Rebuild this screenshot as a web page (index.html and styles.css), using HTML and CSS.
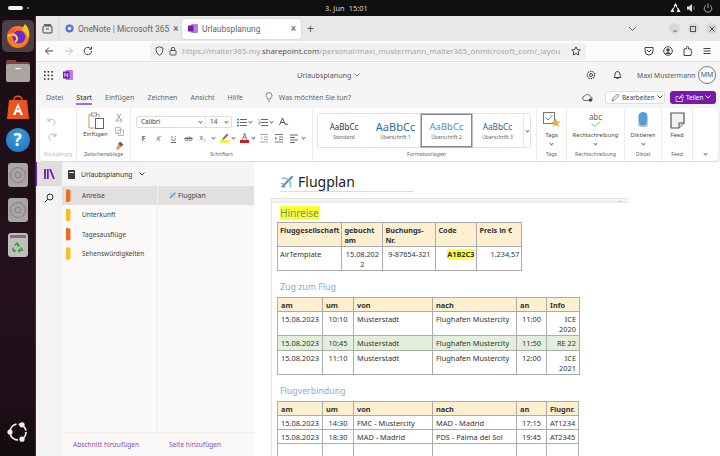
FILE: index.html
```html
<!DOCTYPE html>
<html lang="de">
<head>
<meta charset="utf-8">
<title>Urlaubsplanung</title>
<link rel="stylesheet" href="styles.css">
</head>
<body>
<header class="topbar">
  <div class="activities"><i class="pill"></i><i class="dot"></i></div>
  <div class="clock">3. Jun&nbsp;&nbsp;15:01</div>
  <div class="tray">
    <svg width="11" height="10" viewBox="0 0 11 10"><path d="M5.500 0 7.500 3H3.500Z M2.500 5 4.500 9H.5Z M8.500 5 10.500 9H6.500Z" fill="#eee"/><path d="M5.500 2 2.500 7M5.500 2 8.500 7" stroke="#eee"/></svg>
    <svg width="10" height="10" viewBox="0 0 10 10"><path d="M0 3.500H2L5 1V9L2 6.500H0Z" fill="#ddd"/><path d="M6.500 3a3 3 0 0 1 0 4" stroke="#777" fill="none"/></svg>
    <svg width="10" height="10" viewBox="0 0 10 10"><path d="M3 2.200a3.800 3.800 0 1 0 4 0M5 .5V5" stroke="#aaa" fill="none"/></svg>
  </div>
</header>
<div class="desktop">
  <nav class="dock">
    <div class="dock-item dock-active">
      <svg width="26" height="26" viewBox="0 0 26 26"><circle cx="13" cy="14" r="11" fill="#ff7a1f"/><path d="M20 1c4 4 5 9 4 14L17 6Z" fill="#ffc21f"/><path d="M2 11c2-4 5-6 9-6l-3 5Z" fill="#ff4f3c"/><circle cx="14" cy="14" r="6.500" fill="#6a2bd0"/><path d="M3 13c3-2 6-2 8 0s1 5-1 6" stroke="#ffd23f" stroke-width="2" fill="none"/></svg>
    </div>
    <div class="dock-item dock-folder">
      <svg width="24" height="22" viewBox="0 0 24 22"><path d="M0 2a2 2 0 0 1 2-2h7l2 2h11a2 2 0 0 1 2 2v3H0Z" fill="#8a3f3f"/><rect y="4" width="24" height="18" rx="2" fill="#a8a5a2"/><rect x="9.500" y="8" width="5" height="1.200" fill="#fff"/></svg>
    </div>
    <div class="dock-item dock-store">
      <svg width="24" height="24" viewBox="0 0 24 24"><path d="M3 5h18l2 19H1Z" fill="#e9541f"/><path d="M8 5c0-5 8-5 8 0" stroke="#e9541f" stroke-width="1.500" fill="none"/><path d="M12 8 7 20h2.500l1-2.800h3l1 2.800H17Zm0 4 1 3h-2Z" fill="#fff"/></svg>
    </div>
    <div class="dock-item dock-help">
      <div class="help-ball">?</div>
    </div>
    <div class="dock-item dock-disk">
      <div class="disk-tile"><svg width="18" height="18" viewBox="0 0 18 18"><circle cx="9" cy="9" r="7.500" fill="none" stroke="#888" stroke-width="1.100"/><circle cx="9" cy="9" r="2.800" fill="none" stroke="#888" stroke-width="1.100"/><path d="M12 3l3 1-1 3" stroke="#999" fill="none"/></svg></div>
    </div>
    <div class="dock-item dock-disk2">
      <div class="disk-tile"><svg width="18" height="18" viewBox="0 0 18 18"><circle cx="9" cy="9" r="7.500" fill="none" stroke="#888" stroke-width="1.100"/><circle cx="9" cy="9" r="2.800" fill="none" stroke="#888" stroke-width="1.100"/><path d="M12 3l3 1-1 3" stroke="#999" fill="none"/></svg></div>
    </div>
    <div class="dock-item dock-trash">
      <div class="trash-tile"><i class="trash-lid"></i><svg width="13" height="13" viewBox="0 0 13 13"><path d="M6.500 1 9 5 7 6 5.500 3.500 4.500 5 3 4ZM10.500 6 12.500 10H9V12L6.500 9.500 9 7V8.800H10.300L9 6.800ZM1 7.500 3 6 2.500 8 4.500 9V11H2Z" fill="#2fa32f"/></svg></div>
    </div>
    <div class="dock-spacer"></div>
    <div class="dock-ubuntu">
      <svg width="22" height="22" viewBox="0 0 22 22"><circle cx="11" cy="11" r="8" fill="none" stroke="#eee" stroke-width="1.800" stroke-dasharray="10.500 2.200"/><circle cx="15" cy="3.800" r="2.600" fill="#eee"/><circle cx="3" cy="11" r="2.600" fill="#eee"/><circle cx="15" cy="18.200" r="2.600" fill="#eee"/></svg>
    </div>
  </nav>
  <div class="browser">
    <div class="tabstrip">
      <div class="tab-side">
        <svg width="11" height="11" viewBox="0 0 11 11"><rect x="1" y="3" width="9" height="7" rx="1" fill="none" stroke="#444"/><rect x="2" y="1" width="7" height="2" fill="#666"/><path d="M4 6h3" stroke="#444"/></svg>
      </div>
      <div class="btab">
        <svg class="fav" width="9" height="9" viewBox="0 0 9 9"><circle cx="4.500" cy="4.500" r="4" fill="#4a78d8"/><circle cx="4.500" cy="4.500" r="1.800" fill="#eee"/><path d="M4.500.5a4 4 0 0 1 4 4H6.300Z" fill="#9a66d8"/></svg>
        <span class="btab-title">OneNote | Microsoft 365</span><span class="btab-x">×</span>
      </div>
      <div class="btab btab-on">
        <svg class="fav" width="10" height="9" viewBox="0 0 10 9"><rect x="3" y="0" width="7" height="9" rx="1" fill="#b57ee0"/><rect x="0" y="1.500" width="5.500" height="6" fill="#7719aa"/></svg>
        <span class="btab-title">Urlaubsplanung</span><span class="btab-x">×</span>
      </div>
      <div class="tab-plus">+</div>
      <div class="tab-fill"></div>
      <svg class="tab-chev" width="9" height="6" viewBox="0 0 9 6"><path d="M1 1l3.500 3.500L8 1" fill="none" stroke="#666"/></svg>
      <div class="winbtns">
        <span class="winbtn"><svg width="8" height="8" viewBox="0 0 8 8"><path d="M2 6h4" stroke="#666"/></svg></span>
        <span class="winbtn"><svg width="8" height="8" viewBox="0 0 8 8"><rect x="1.500" y="1.500" width="5" height="5" fill="none" stroke="#555"/></svg></span>
        <span class="winbtn"><svg width="8" height="8" viewBox="0 0 8 8"><path d="M1.500 1.500l5 5m0-5l-5 5" stroke="#444"/></svg></span>
      </div>
    </div>
    <div class="navbar">
      <div class="nav-btns">
        <svg width="10" height="10" viewBox="0 0 10 10"><path d="M9 5H1.500M5 1.500 1.500 5 5 8.500" fill="none" stroke="#444"/></svg>
        <svg width="10" height="10" viewBox="0 0 10 10"><path d="M1 5h7.500M5 1.500 8.500 5 5 8.500" fill="none" stroke="#bbb"/></svg>
        <svg width="10" height="10" viewBox="0 0 10 10"><path d="M8.500 5a3.700 3.700 0 1 1-1-2.500M8.500 .8v2.400H6" fill="none" stroke="#444"/></svg>
      </div>
      <div class="urlbar">
        <svg width="9" height="10" viewBox="0 0 9 10"><path d="M4.500.7 8 2c0 4-1.200 6-3.500 7.300C2.200 8 1 6 1 2Z" fill="none" stroke="#555"/></svg>
        <svg width="8" height="10" viewBox="0 0 8 10"><rect x="1" y="4.500" width="6" height="4.500" rx=".8" fill="none" stroke="#555"/><path d="M2.300 4.500V3a1.700 1.700 0 0 1 3.400 0v1.500" fill="none" stroke="#555"/></svg>
        <div class="url"><span>https://malter365-my.</span><b>sharepoint.com</b><span>/personal/maxi_mustermann_malter365_onmicrosoft_com/_layou</span></div>
        <svg width="10" height="10" viewBox="0 0 10 10"><path d="M5 .8 6.300 3.600 9.300 4 7.100 6 7.700 9 5 7.500 2.300 9 2.900 6 .7 4 3.700 3.600Z" fill="none" stroke="#444"/></svg>
      </div>
      <div class="nav-tools">
        <svg width="10" height="10" viewBox="0 0 10 10"><path d="M1 1.500h8V5a4 4 0 0 1-8 0Z" fill="none" stroke="#444"/><path d="M3 4l2 2 2-2" fill="none" stroke="#444"/></svg>
        <svg width="10" height="10" viewBox="0 0 10 10"><circle cx="5" cy="5" r="4.300" fill="none" stroke="#444"/><circle cx="5" cy="4" r="1.800" fill="#444"/><path d="M2 8c1-2.500 5-2.500 6 0Z" fill="#444"/></svg>
        <svg width="10" height="10" viewBox="0 0 10 10"><path d="M1 3h2.500V1.500a1 1 0 0 1 2 0V3H8v2.500a1 1 0 0 1 0 2V9.500H1Z" fill="none" stroke="#444"/></svg>
        <svg width="10" height="10" viewBox="0 0 10 10"><path d="M1.500 2.500h7M1.500 5h7M1.500 7.500h7" stroke="#444"/></svg>
      </div>
    </div>
    <div class="app">
      <div class="appbar">
        <svg class="waffle" width="9" height="9" viewBox="0 0 9 9"><g fill="#333"><rect width="1.600" height="1.600"/><rect x="3.600" width="1.600" height="1.600"/><rect x="7.200" width="1.600" height="1.600"/><rect y="3.600" width="1.600" height="1.600"/><rect x="3.600" y="3.600" width="1.600" height="1.600"/><rect x="7.200" y="3.600" width="1.600" height="1.600"/><rect y="7.200" width="1.600" height="1.600"/><rect x="3.600" y="7.200" width="1.600" height="1.600"/><rect x="7.200" y="7.200" width="1.600" height="1.600"/></g></svg>
        <svg class="onenote" width="10" height="10" viewBox="0 0 10 10"><rect x="2.500" width="7.500" height="10" rx="1" fill="#b57ee0"/><rect y="1.500" width="6.500" height="7" rx=".5" fill="#7719aa"/><path d="M1.800 6.800V3.200L4.700 6.800V3.200" fill="none" stroke="#fff" stroke-width=".8"/></svg>
        <div class="doc-title">Urlaubsplanung <svg width="6" height="4" viewBox="0 0 6 4"><path d="M.5.500 3 3 5.500.5" fill="none" stroke="#888"/></svg></div>
        <svg class="gear" width="10" height="10" viewBox="0 0 10 10"><circle cx="5" cy="5" r="1.500" fill="none" stroke="#444"/><circle cx="5" cy="5" r="3.700" fill="none" stroke="#444" stroke-width="1.200" stroke-dasharray="1.400 .9"/></svg>
        <svg class="bell" width="9" height="10" viewBox="0 0 9 10"><path d="M1 7.500c1-1 1-2 1-3.500a2.500 2.500 0 0 1 5 0c0 1.500 0 2.500 1 3.500ZM3.500 8.500h2" fill="none" stroke="#444"/></svg>
        <div class="user">Maxi Mustermann</div>
        <div class="avatar">MM</div>
      </div>
      <div class="menutabs">
        <span class="mt">Datei</span>
        <span class="mt mt-on">Start</span>
        <span class="mt">Einfügen</span>
        <span class="mt">Zeichnen</span>
        <span class="mt">Ansicht</span>
        <span class="mt">Hilfe</span>
        <svg class="bulb" width="8" height="10" viewBox="0 0 8 10"><path d="M2.500 7C2.500 5.500 1 5 1 3.500a3 3 0 0 1 6 0C7 5 5.500 5.500 5.500 7ZM3 9h2" fill="none" stroke="#666" stroke-width=".8"/></svg>
        <span class="tell">Was möchten Sie tun?</span>
        <svg class="cloud" width="11" height="9" viewBox="0 0 11 9"><path d="M3 7.500a2.200 2.200 0 0 1-.3-4.400 3 3 0 0 1 5.600.5 2 2 0 0 1 .7 3.800Z" fill="none" stroke="#444" stroke-width=".8"/><circle cx="8.500" cy="7" r="1.800" fill="#444"/></svg>
        <span class="btn-edit"><svg width="9" height="9" viewBox="0 0 9 9"><path d="M1 8 1.500 6 6.500 1 8 2.500 3 7.500Z" fill="none" stroke="#444" stroke-width=".7"/></svg>Bearbeiten <svg width="6" height="4" viewBox="0 0 6 4"><path d="M.5.500 3 3 5.500.5" fill="none" stroke="#444"/></svg></span>
        <span class="btn-share"><svg width="9" height="9" viewBox="0 0 9 9"><path d="M1 3.500h2.500M1 3.500V8.500H7.500V6M4 6c0-2 1.500-3 3-3V1.500L8.800 3.500 7 5.500V4C5.500 4 4.500 5 4 6Z" fill="none" stroke="#fff" stroke-width=".7"/></svg>Teilen <svg width="6" height="4" viewBox="0 0 6 4"><path d="M.5.500 3 3 5.500.5" fill="none" stroke="#fff"/></svg></span>
      </div>
      <div class="ribbon">
        <section class="rg rg-undo">
          <div class="rg-body undo-body">
            <svg width="10" height="9" viewBox="0 0 10 9"><path d="M1 1v3h3M1 4c2-3 7-2 7 1.500 0 1.500-1 2.500-2 3" fill="none" stroke="#bbb"/></svg>
            <svg width="10" height="9" viewBox="0 0 10 9"><path d="M9 1v3H6M9 4C7 1 2 2 2 5.500c0 1.500 1 2.500 2 3" fill="none" stroke="#bbb"/></svg>
          </div>
          <div class="rg-label muted">Rückgängig</div>
        </section>
        <section class="rg rg-clip">
          <div class="rg-body clip-body">
            <div class="paste">
              <svg width="16" height="17" viewBox="0 0 16 17"><path d="M1 2.500h10V16H1Z" fill="#fff" stroke="#c89a60"/><rect x="3.500" y="1" width="5" height="3" fill="#fff" stroke="#999"/><rect x="7.500" y="6.500" width="8" height="10" fill="#fff" stroke="#666"/></svg>
              <span>Einfügen</span>
            </div>
            <div class="clip-tools">
              <svg width="8" height="9" viewBox="0 0 8 9"><path d="M2 .5 5.500 6.500M6 .5 2.500 6.500" stroke="#9ab" fill="none"/><circle cx="2" cy="7.500" r="1" fill="none" stroke="#9ab"/><circle cx="6" cy="7.500" r="1" fill="none" stroke="#9ab"/></svg>
              <svg width="9" height="9" viewBox="0 0 9 9"><path d="M.5.500h5v6h-5Z M3 3h5.500v5.500H3Z" fill="#f8f8f8" stroke="#bbb"/></svg>
              <svg width="9" height="9" viewBox="0 0 9 9"><path d="M5 .5 8.500 3.500 6 6 3 3Z" fill="#666"/><path d="M3 3.500 6 6 4 8.500H0C2 7.500 2 5 3 3.500Z" fill="#e8a040"/></svg>
            </div>
          </div>
          <div class="rg-label">Zwischenablage</div>
        </section>
        <section class="rg rg-font">
          <div class="rg-body font-body">
            <div class="font-row">
              <div class="fontbox"><span class="fb-name">Calibri<i class="c fb-c"></i></span><span class="fb-size">14<i class="c fb-c"></i></span></div>
              <svg class="list-ic" width="10" height="9" viewBox="0 0 10 9"><g fill="none" stroke="#666"><path d="M3 1.500h7M3 4.500h7M3 7.500h7"/></g><g fill="#2b88d8"><rect width="2" height="1.500" y=".8"/><rect width="2" height="1.500" y="3.800"/><rect width="2" height="1.500" y="6.800"/></g></svg>
              <i class="c c2"></i>
              <svg width="10" height="9" viewBox="0 0 10 9"><g fill="none" stroke="#666"><path d="M3 1.500h7M3 4.500h7M3 7.500h7"/></g><path d="M1 .5v2M.5 4h2L.5 6h2" fill="none" stroke="#2b88d8" stroke-width=".7"/></svg>
              <i class="c c2"></i>
              <svg width="10" height="10" viewBox="0 0 10 10"><path d="M.5 8 3.500 1 6.500 8M1.700 5.500h3.600" fill="none" stroke="#555"/><path d="M6 6.500 8 8.500 9.500 6.500Z" fill="#9b59c8"/></svg>
            </div>
            <div class="font-row fmt-row">
              <b class="f">F</b><i class="f f-i">K</i><u class="f">U</u><s class="f">ab</s>
              <span class="f f-x">x<sub>2</sub></span><i class="c c3"></i>
              <span class="hl"><svg width="9" height="7" viewBox="0 0 9 7"><path d="M2 6 7 .5 8.500 2 3.500 7Z" fill="#777"/></svg><i class="bar bar-y"></i></span><i class="c c3"></i>
              <span class="hl hl-a">A<i class="bar bar-r"></i></span><i class="c c3"></i>
              <svg class="ind" width="10" height="9" viewBox="0 0 10 9"><path d="M1 .5h8M5 3h4M5 5.500h4M1 8h8" stroke="#aaa"/><path d="M3.500 2.500 1 4.200 3.500 6Z" fill="#bcd"/></svg>
              <svg class="ind" width="10" height="9" viewBox="0 0 10 9"><path d="M1 .5h8M5 3h4M5 5.500h4M1 8h8" stroke="#777"/><path d="M1 2.500 3.500 4.200 1 6Z" fill="#5a9ad8"/></svg>
              <svg class="ind" width="10" height="9" viewBox="0 0 10 9"><path d="M1 1h8M1 3.500h5M1 6h8M1 8.500h5" stroke="#666"/></svg><i class="c c3"></i>
            </div>
          </div>
          <div class="rg-label">Schriftart</div>
        </section>
        <section class="rg rg-styles">
          <div class="gallery">
            <div class="st"><span class="s-t s-n">AaBbCc</span><span class="s-l">Standard</span></div>
            <div class="st"><span class="s-t s-1">AaBbCc</span><span class="s-l">Überschrift 1</span></div>
            <div class="st st-on"><span class="s-t s-2">AaBbCc</span><span class="s-l">Überschrift 2</span></div>
            <div class="st"><span class="s-t s-3">AaBbCc</span><span class="s-l">Überschrift 3</span></div>
            <div class="st-more"><i class="c"></i></div>
          </div>
          <div class="rg-label">Formatvorlagen</div>
        </section>
        <section class="rg rg-tags">
          <div class="big">
            <svg width="18" height="17" viewBox="0 0 18 17"><rect x=".5" y=".5" width="11" height="11" fill="#fff" stroke="#777"/><path d="M2.500 5.500 5 8 9.500 3" fill="none" stroke="#3aa655"/><path d="M12.500 6 14 9.500H17.500L15 11.500 16 15 12.500 13 9.500 15 10.500 11.500 8 9.500H11Z" fill="#f0a93c"/></svg>
            <span>Tags</span><i class="c"></i>
          </div>
          <div class="rg-label">Tags</div>
        </section>
        <section class="rg rg-spell">
          <div class="big">
            <div class="abc"><span>abc</span><svg width="10" height="6" viewBox="0 0 10 6"><path d="M.5 2.500 3.500 5.500 9.500.5" fill="none" stroke="#7cc48c"/></svg></div>
            <span>Rechtschreibung</span><i class="c"></i>
          </div>
          <div class="rg-label">Rechtschreibung</div>
        </section>
        <section class="rg rg-dict">
          <div class="big">
            <svg width="12" height="17" viewBox="0 0 12 17"><rect x="1.500" width="9" height="14" rx="4.500" fill="#5a9ad8"/><path d="M1 11c1 3 9 3 10 0v2c-1 3-9 3-10 0Z" fill="#bbb"/></svg>
            <span>Diktieren</span><i class="c"></i>
          </div>
          <div class="rg-label">Diktat</div>
        </section>
        <section class="rg rg-feed">
          <div class="big">
            <svg width="16" height="17" viewBox="0 0 16 17"><path d="M2 1h13v10l-5 5H2Z" fill="#f2f2f2" stroke="#555" stroke-width="1.200"/><path d="M10 16v-5h5" fill="#ddd" stroke="#555"/></svg>
            <span>Feed</span>
          </div>
          <div class="rg-label">Feed</div>
        </section>
        <div class="rg-collapse"><i class="c"></i></div>
      </div>
      <div class="workspace">
        <aside class="rail">
          <div class="rail-on"><svg width="11" height="10" viewBox="0 0 11 10"><path d="M1 0v10M3.800 0v10" stroke="#7719aa" stroke-width="1.800"/><path d="M6 0 10 10" stroke="#7719aa" stroke-width="1.800"/></svg></div>
          <div class="rail-search"><svg width="10" height="10" viewBox="0 0 10 10"><circle cx="6" cy="4" r="3" fill="none" stroke="#333"/><path d="M3.800 6.200.8 9.200" stroke="#333"/></svg></div>
        </aside>
        <div class="nbpane">
          <div class="nbhead">
            <svg width="7" height="9" viewBox="0 0 7 9"><rect width="7" height="9" rx=".8" fill="#3b3b3b"/><rect x="1.200" y="2" width="4.600" height="1" fill="#fff"/></svg>
            <span>Urlaubsplanung</span>
            <svg width="6" height="4" viewBox="0 0 6 4"><path d="M.5.500 3 3 5.500.5" fill="none" stroke="#444"/></svg>
          </div>
          <div class="nbcols">
            <ul class="sections">
              <li class="sec sec-on"><i class="sw sw-o"></i>Anreise</li>
              <li class="sec"><i class="sw sw-y"></i>Unterkunft</li>
              <li class="sec"><i class="sw sw-o"></i>Tagesausflüge</li>
              <li class="sec"><i class="sw sw-y"></i>Sehenswürdigkeiten</li>
            </ul>
            <ul class="pages">
              <li class="pg pg-on"><svg width="7" height="7" viewBox="0 0 14 14"><path d="M2.500 11.500 12 2" stroke="#5c93c0" stroke-width="2.400" stroke-linecap="round"/><path d="M9 4 1.500 3.500M9.500 5 10.500 12.500" stroke="#9cc6e4" stroke-width="2"/></svg>Flugplan</li>
            </ul>
          </div>
          <div class="nbfoot">
            <span class="add add-s">Abschnitt hinzufügen</span>
            <span class="add">Seite hinzufügen</span>
          </div>
        </div>
        <main class="page">
          <div class="page-title">
            <svg width="14" height="14" viewBox="0 0 14 14"><path d="M2.500 11.500 12 2" stroke="#5c93c0" stroke-width="2.200" stroke-linecap="round"/><path d="M8.500 4 1.500 3M9.500 5 10.800 12.500" stroke="#9cc6e4" stroke-width="2"/><path d="M3.500 9 1 8.500M4.500 10.500 5 13" stroke="#6a9cc4"/></svg>
            <span>Flugplan</span>
          </div>
          <div class="outline">
            <div class="outline-bar"><i>↔</i></div>
            <div class="h-yellow"><mark>Hinreise</mark></div>
            <table class="tbl t1">
              <colgroup><col class="c63"><col class="c41"><col class="c53"><col class="c41"><col class="c45"></colgroup>
              <tr class="hd"><td>Fluggesellschaft</td><td>gebucht am</td><td>Buchungs-<br>Nr.</td><td>Code</td><td>Preis in €</td></tr>
              <tr class="tall"><td>AirTemplate</td><td class="ctr brk">15.08.2022</td><td class="ctr">9-87654-321</td><td class="rt"><b class="code">A1B2C3</b></td><td class="rt">1.234,57</td></tr>
            </table>
            <h3 class="sub">Zug zum Flug</h3>
            <table class="tbl t2">
              <colgroup><col class="a45"><col class="a31"><col class="a79"><col class="a84"><col class="a30"><col class="a33"></colgroup>
              <tr class="hd"><td>am</td><td>um</td><td>von</td><td>nach</td><td>an</td><td>Info</td></tr>
              <tr><td class="ctr">15.08.2023</td><td class="ctr">10:10</td><td>Musterstadt</td><td>Flughafen Mustercity</td><td class="ctr">11:00</td><td class="rt">ICE 2020</td></tr>
              <tr class="green"><td class="ctr">15.08.2023</td><td class="ctr">10:45</td><td>Musterstadt</td><td>Flughafen Mustercity</td><td class="ctr">11:50</td><td class="rt">RE 22</td></tr>
              <tr><td class="ctr">15.08.2023</td><td class="ctr">11:10</td><td>Musterstadt</td><td>Flughafen Mustercity</td><td class="ctr">12:00</td><td class="rt">ICE 2021</td></tr>
            </table>
            <h3 class="sub">Flugverbindung</h3>
            <table class="tbl t3">
              <colgroup><col class="a45"><col class="a31"><col class="a79"><col class="a84"><col class="a30"><col class="a31b"></colgroup>
              <tr class="hd"><td>am</td><td>um</td><td>von</td><td>nach</td><td>an</td><td>Flugnr.</td></tr>
              <tr><td class="ctr">15.08.2023</td><td class="ctr">14:30</td><td>FMC - Mustercity</td><td>MAD - Madrid</td><td class="ctr">17:15</td><td>AT1234</td></tr>
              <tr><td class="ctr">15.08.2023</td><td class="ctr">18:30</td><td>MAD - Madrid</td><td>PDS - Palma del Sol</td><td class="ctr">19:45</td><td>AT2345</td></tr>
              <tr class="blank"><td></td><td></td><td></td><td></td><td></td><td></td></tr>
            </table>
          </div>
        </main>
      </div>
    </div>
  </div>
</div>
</body>
</html>
```
FILE: styles.css
```css
* { box-sizing: border-box; }
html, body { margin: 0; padding: 0; }
body { width: 720px; height: 456px; overflow: hidden; font-family: "Noto Sans", "Open Sans", sans-serif; color: #333; display: flex; flex-direction: column; background: #fff; }
ul { list-style: none; margin: 0; padding: 0; }
svg { display: block; flex: none; }
i { font-style: normal; }

.topbar { height: 16px; flex: none; background: #101010; display: flex; align-items: center; }
.activities { display: flex; align-items: center; gap: 4px; margin-left: 8px; width: 317px; }
.pill { width: 15px; height: 4px; border-radius: 2px; background: #f4f4f4; }
.dot { width: 2px; height: 2px; border-radius: 50%; background: #999; }
.clock { font-size: 7.300px; color: #ddd; letter-spacing: .1px; white-space: nowrap; }
.tray { margin-left: auto; margin-right: 7px; display: flex; gap: 6px; }

.desktop { flex: 1; display: flex; min-height: 0; }
.dock { width: 36px; flex: none; background: linear-gradient(#1a0e14, #24111c 60%, #1f0f18 88%, #120b10); display: flex; flex-direction: column; align-items: center; border-right: 1px solid #3a3036; }
.dock-item { display: flex; justify-content: center; align-items: center; width: 32px; }
.dock-active { height: 32px; margin-top: 4px; background: #4a4045; border-radius: 5px; }
.dock-folder { margin-top: 8px; }
.dock-store { margin-top: 13px; }
.dock-help { margin-top: 9px; }
.help-ball { width: 24px; height: 24px; border-radius: 50%; background: radial-gradient(circle at 50% 35%, #3f9be0, #1c6fb8); color: #fff; font-size: 17px; font-weight: 700; line-height: 24px; text-align: center; }
.dock-disk { margin-top: 11px; }
.dock-disk2 { margin-top: 11px; }
.disk-tile { width: 20px; height: 24px; background: #a9a6a4; border-radius: 3px; display: flex; align-items: center; justify-content: center; }
.dock-trash { margin-top: 11px; }
.trash-tile { width: 20px; height: 24px; background: #c0bdbb; border-radius: 3px; display: flex; flex-direction: column; align-items: center; gap: 3px; padding-top: 2px; }
.trash-lid { width: 16px; height: 3px; background: #777; display: block; }
.dock-spacer { flex: 1; }
.dock-ubuntu { margin-bottom: 13px; }

.browser { flex: 1; min-width: 0; display: flex; flex-direction: column; }
.tabstrip { height: 25px; flex: none; background: #e8e8e8; display: flex; align-items: center; }
.tab-side { width: 23px; height: 100%; display: flex; align-items: center; justify-content: center; border-right: 1px solid #d8d8d8; }
.btab { width: 120px; height: 20px; display: flex; align-items: center; padding: 0 5px 0 6px; font-family: Roboto, sans-serif; font-size: 8.400px; color: #666; gap: 4px; white-space: nowrap; }
.btab-title { flex: 1; }
.btab-on { width: 119px; background: #fff; border-radius: 3px; box-shadow: 0 0 2px rgba(0,0,0,.2); margin-left: 3px; }
.btab-x { font-size: 10px; color: #555; line-height: 10px; }
.tab-plus { font-size: 12px; color: #555; margin-left: 6px; line-height: 12px; }
.tab-fill { flex: 1; }
.tab-chev { margin-right: 32px; }
.winbtns { display: flex; gap: 7.500px; margin-right: 3px; }
.winbtn { width: 11px; height: 11px; border-radius: 50%; background: #d8d8d8; display: flex; align-items: center; justify-content: center; }

.navbar { height: 21px; flex: none; background: #fbfbfb; display: flex; align-items: center; border-bottom: 1px solid #e2e2e2; }
.nav-btns { display: flex; gap: 9.500px; width: 114px; padding-left: 8px; }
.urlbar { width: 436px; height: 17px; background: #f0f0f0; border-radius: 3px; display: flex; align-items: center; gap: 5px; padding: 0 5px; }
.url { flex: 1; font-size: 7.800px; color: #a8a8a8; white-space: nowrap; }
.url b { font-weight: 400; color: #555; }
.nav-tools { display: flex; gap: 9.300px; margin-left: 58px; }

.app { flex: 1; min-height: 0; display: flex; flex-direction: column; background: #f5f5f5; }
.appbar { height: 26px; flex: none; display: flex; align-items: center; font-size: 7.200px; color: #555; }
.waffle { margin-left: 8px; }
.onenote { margin-left: 10px; }
.doc-title { margin-left: 224px; display: flex; gap: 3px; align-items: center; width: 70px; white-space: nowrap; }
.gear { margin-left: 219px; }
.bell { margin-left: 17px; }
.user { margin-left: 15px; font-size: 6.800px; white-space: nowrap; }
.avatar { width: 18px; height: 18px; border-radius: 50%; border: 1px solid #777; background: #fff; font-size: 7px; line-height: 16px; text-align: center; margin-left: auto; margin-right: 4px; }

.menutabs { height: 17px; flex: none; display: flex; align-items: center; font-size: 7px; color: #666; padding: 1px 0 0 10px; }
.mt { margin-right: 13px; padding-top: 2px; line-height: 10px; white-space: nowrap; }
.mt-on { color: #222; border-bottom: 2px solid #a86bc8; margin-top: 2px; }
.bulb { margin-left: 9px; }
.tell { margin-left: 6px; white-space: nowrap; }
.cloud { margin-left: auto; margin-right: 12px; }
.btn-edit, .btn-share { height: 13px; display: flex; align-items: center; gap: 2px; font-size: 6.300px; border-radius: 3px; padding: 0 5px; white-space: nowrap; }
.btn-edit { width: 60px; background: #fff; border: 1px solid #ddd; color: #444; }
.btn-share { width: 46px; background: #7719aa; color: #fff; margin: 0 4px 0 5px; }

.ribbon { height: 53px; flex: none; margin: 3px 2px 0 4px; background: #fff; border-radius: 4px; box-shadow: 0 1px 2px rgba(0,0,0,.15); display: flex; font-size: 5.800px; color: #444; }
.rg { display: flex; flex-direction: column; border-right: 1px solid #ececec; flex: none; }
.rg-body { flex: 1; min-height: 0; }
.rg-label { height: 13px; font-size: 5.200px; line-height: 13px; text-align: center; color: #666; white-space: nowrap; }
.muted { color: #bbb; }
.rg-undo { width: 37px; }
.undo-body { display: flex; flex-direction: column; align-items: center; gap: 6px; padding-top: 9px; margin-left: -13px; }
.rg-clip { width: 54px; }
.clip-body { display: flex; padding: 4px 0 0 6px; gap: 7px; }
.paste { display: flex; flex-direction: column; align-items: center; gap: 1px; width: 25px; white-space: nowrap; }
.clip-tools { display: flex; flex-direction: column; gap: 5px; padding-top: 1px; }
.rg-font { width: 182px; }
.font-body { padding: 8px 0 0 5px; }
.font-row { display: flex; align-items: center; }
.fontbox { width: 96px; height: 12px; border: 1px solid #ddd; border-radius: 2px; display: flex; font-size: 6.500px; line-height: 10px; }
.list-ic { margin-left: 5px; }
.fb-name { width: 69px; padding-left: 4px; border-right: 1px solid #e6e6e6; position: relative; }
.fb-size { flex: 1; padding-left: 4px; position: relative; }
.fb-c { position: absolute; right: 3px; top: 3px; }
.c { display: inline-block; flex: none; width: 3px; height: 3px; border-right: 1px solid #777; border-bottom: 1px solid #777; transform: rotate(45deg); }
.c2 { margin: -2px 6px 0 2px; }
.c3 { margin: -2px 5px 0 3px; }
.fmt-row { margin-top: 5px; font-size: 7px; }
.f { width: 15px; font-size: 7px; color: #666; text-align: center; text-decoration-thickness: .5px; }
.f-i { font-style: italic; }
.f-x { width: 13px; }
.f sub { font-size: 4px; color: #2b88d8; }
.hl { display: flex; flex-direction: column; align-items: center; width: 9px; font-size: 8px; line-height: 7px; color: #555; }
.bar { display: block; width: 9px; height: 2.500px; }
.bar-y { background: #f5f03c; }
.bar-r { background: #c81e28; }
.ind { margin-right: 5px; }
.fmt-row .c3 + .ind { margin-left: -1px; }
.fmt-row .ind + .c3 { margin-left: -2px; }
.rg-styles { width: 224px; padding-left: 4px; }
.gallery { flex: 1; margin: 5px 5px 0 0; border: 1px solid #e2e2e2; border-radius: 2px; display: flex; min-height: 0; }
.st { width: 51px; display: flex; flex-direction: column; align-items: center; padding-top: 6px; gap: 1px; white-space: nowrap; }
.st:first-child { width: 52px; }
.st-on { border: 1px solid #888; box-shadow: 0 0 0 .5px #888; padding-top: 5px; }
.s-t { line-height: 13px; }
.s-n { font-size: 8px; color: #333; }
.s-1 { font-size: 11px; color: #2f6a9e; }
.s-2 { font-size: 9.500px; color: #4a90d0; }
.s-3 { font-size: 8.300px; color: #2f5e8e; }
.s-l { font-size: 5px; color: #666; }
.st-more { flex: 1; border-left: 1px solid #e6e6e6; display: flex; align-items: center; justify-content: center; }
.rg-tags { width: 30px; }
.rg-spell { width: 58px; }
.rg-dict { width: 37px; }
.rg-feed { width: 31px; }
.big { flex: 1; min-height: 0; display: flex; flex-direction: column; align-items: center; padding-top: 4px; gap: 2px; white-space: nowrap; line-height: 8px; }
.abc { height: 17px; display: flex; flex-direction: column; align-items: center; font-size: 8px; line-height: 9px; color: #666; }
.big .c { margin-top: 1px; }
.rg-collapse { flex: 1; display: flex; align-items: flex-end; justify-content: center; padding-bottom: 6px; }

.workspace { flex: 1; min-height: 0; display: flex; margin-top: 1px; }
.rail { width: 26px; flex: none; background: #f3f3f3; }
.rail-on { height: 24px; background: #dedede; border-left: 1px solid #7719aa; display: flex; align-items: center; justify-content: center; }
.rail-search { height: 24px; display: flex; align-items: center; justify-content: center; }
.nbpane { width: 192px; flex: none; background: #faf9f8; display: flex; flex-direction: column; }
.nbhead { height: 24px; flex: none; display: flex; align-items: center; gap: 6px; padding-left: 6px; font-size: 6.800px; color: #333; background: #f5f5f5; }
.nbcols { flex: 1; min-height: 0; display: flex; }
.sections { width: 96px; border-right: 1px solid #f0efee; }
.sec { height: 19.300px; display: flex; align-items: center; font-size: 6.500px; color: #444; white-space: nowrap; }
.sec-on, .pg-on { background: #e1e0df; }
.sw { width: 4.500px; height: 14px; margin: 0 11.500px 0 4px; border-radius: 2px 0 0 2px; clip-path: polygon(0 0, 100% 12%, 100% 88%, 0 100%); }
.sw-o { background: #ee6c1e; }
.sw-y { background: #fcbc28; }
.pages { flex: 1; }
.pg { height: 19.300px; display: flex; align-items: center; gap: 2px; padding-left: 11px; font-size: 6.800px; color: #444; }
.nbfoot { height: 24px; flex: none; border-top: 1px solid #efeeed; display: flex; align-items: center; font-size: 6.600px; color: #8a4fb5; }
.add { padding-left: 11px; white-space: nowrap; }
.add-s { width: 96px; }

.page { flex: 1; min-width: 0; background: #fff; overflow: hidden; padding-left: 17px; }
.page-title { margin: 10px 0 0 9px; width: 134px; height: 20px; display: flex; align-items: center; gap: 4px; font-size: 14px; color: #222; border-bottom: 1px solid #ddd; }
.outline { width: 357px; margin-top: 6px; padding-left: 5px; border-left: 1px solid #e6e6e6; }
.outline-bar { height: 5px; background: #f3f3f3; border: 1px solid #e6e6e6; border-left: 0; margin-left: -5px; font-size: 5px; line-height: 3px; text-align: right; padding-right: 5px; color: #777; }
.h-yellow { margin: 4px 0 0 3px; height: 12px; font-size: 10px; line-height: 12px; }
.h-yellow mark { background: #ffff33; color: #5c9a80; padding: 0; }
.tbl { border-collapse: collapse; table-layout: fixed; font-size: 7.400px; color: #333; }
.tbl td { border: 1px solid #acacac; padding: 2px 3px 1px; vertical-align: top; line-height: 10px; }
.hd td { background: #fdefcf; font-weight: 700; height: 14px; }
.t1 { margin-top: 3px; font-size: 7.300px; }
.t1 td { padding-left: 2px; padding-right: 2px; }
.t1 .hd td { height: 24px; }
.tall td { height: 24px; padding-top: 2px; }
.brk { word-break: break-all; }
.ctr { text-align: center; }
.rt { text-align: right; }
.code { background: #ffff33; }
.green td { background: #e2efda; height: 15px; }
.blank td { height: 20px; }
.c63 { width: 63px; } .c41 { width: 41px; } .c53 { width: 53px; } .c45 { width: 45px; }
.a45 { width: 45px; } .a31 { width: 31px; } .a79 { width: 79px; } .a84 { width: 84px; } .a30 { width: 30px; } .a33 { width: 33px; } .a31b { width: 32px; }
.sub { margin: 10px 0 4px; padding-left: 3px; font-weight: 400; font-size: 8.800px; line-height: 12px; color: #7aaed8; }
```
